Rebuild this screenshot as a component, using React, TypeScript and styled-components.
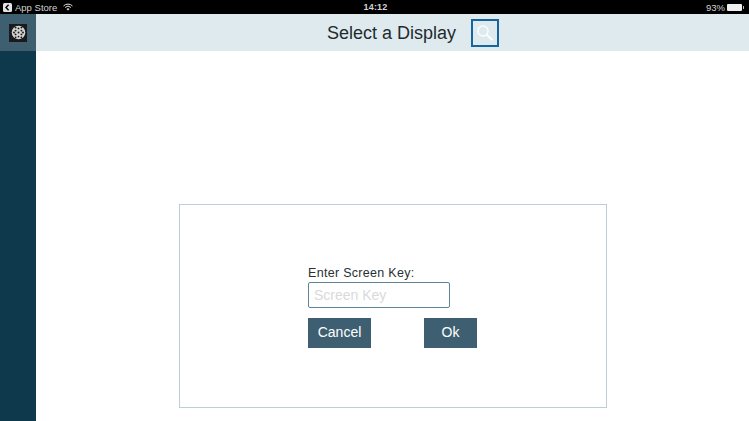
import React from "react";
import styled, { createGlobalStyle } from "styled-components";

const Global = createGlobalStyle`
  html, body { margin: 0; padding: 0; background: #fff; overflow: hidden; }
  * { box-sizing: border-box; }
  body { font-family: "Liberation Sans", Arial, sans-serif; }
`;

const Page = styled.div`
  width: 749px;
  height: 421px;
  display: flex;
  flex-direction: column;
`;

const StatusBar = styled.div`
  height: 14px;
  background: #000;
  color: #d4d4d4;
  font-size: 9.5px;
  display: grid;
  grid-template-columns: 1fr auto 1fr;
  align-items: center;
  padding: 0 4px 0 3px;
`;

const StatusLeft = styled.div`
  display: flex;
  align-items: center;
  gap: 3px;
`;

const StatusRight = styled.div`
  display: flex;
  align-items: center;
  justify-content: flex-end;
  gap: 2px;
`;

const StatusTime = styled.div`
  font-weight: 700;
  font-size: 9px;
  letter-spacing: 0.2px;
  margin-left: 3px;
`;

const StoreLabel = styled.span`
  font-size: 9.5px;
  margin-right: 3px;
`;

const Battery = styled.div`
  width: 15px;
  height: 7px;
  background: #f0f0f0;
  border-radius: 1px;
  margin-right: 3px;
  position: relative;
  &::after {
    content: "";
    position: absolute;
    right: -2px;
    top: 2px;
    width: 1px;
    height: 3px;
    background: #bbb;
  }
`;

const Body = styled.div`
  flex: 1;
  display: flex;
  min-height: 0;
`;

const Sidebar = styled.aside`
  width: 36px;
  background: #0e384c;
  flex: none;
`;

const LogoBlock = styled.div`
  height: 37px;
  background: #3e5f70;
  display: flex;
  align-items: center;
  justify-content: center;
`;

const LogoTile = styled.div`
  width: 18px;
  height: 18px;
  background: #1a1a1c;
  display: flex;
  align-items: center;
  justify-content: center;
`;

const Main = styled.main`
  flex: 1;
  display: flex;
  flex-direction: column;
  min-width: 0;
`;

const Header = styled.header`
  height: 37px;
  background: #deeaee;
  display: flex;
  align-items: center;
  justify-content: center;
  gap: 15px;
  padding-left: 41px;
`;

const Title = styled.h1`
  margin: 0;
  padding-top: 2px;
  font-size: 18px;
  font-weight: 400;
  color: #1f2a30;
`;

const SearchButton = styled.button`
  width: 28px;
  height: 28px;
  padding: 0;
  background: transparent;
  border: 2px solid #1565a0;
  display: flex;
  align-items: center;
  justify-content: center;
`;

const Content = styled.div`
  flex: 1;
  padding: 153px 142px 13px 143px;
`;

const Card = styled.section`
  height: 204px;
  border: 1px solid #bcd0d4;
  background: #fff;
  display: flex;
  flex-direction: column;
  padding: 61px 0 0 128px;
`;

const Label = styled.label`
  font-size: 12.5px;
  color: #2a2f33;
  line-height: 15px;
  letter-spacing: 0.3px;
  margin-bottom: 1px;
`;

const KeyInput = styled.input`
  width: 142px;
  height: 26px;
  border: 1px solid #5f8596;
  border-radius: 2px;
  padding: 0 5px;
  font-size: 14px;
  font-family: inherit;
  outline: none;
  background: #fff;
  &::placeholder { color: #d8dadb; opacity: 1; }
`;

const Actions = styled.div`
  display: flex;
  gap: 53px;
  margin-top: 10px;
`;

const ActionButton = styled.button<{ $w: number }>`
  width: ${(p) => p.$w}px;
  height: 30px;
  border: none;
  background: #3d5f71;
  color: #fff;
  font-size: 14px;
  font-family: inherit;
  padding: 0 0 2px;
`;

const holes: [number, number][] = [
  [7.5, 7.5], [4.6, 5.6], [10.4, 5.6], [4.6, 9.4], [10.4, 9.4], [7.5, 3.4], [7.5, 11.6],
  [3, 7.5], [12, 7.5], [4.6, 2.6], [10.4, 2.6], [4.6, 12.4], [10.4, 12.4],
];

export default function App() {
  return (
    <Page>
      <Global />
      <StatusBar>
        <StatusLeft>
          <svg width="9" height="9" viewBox="0 0 9 9">
            <rect width="9" height="9" rx="1.5" fill="#e4e4e4" />
            <path d="M5.6 1.8 3 4.5l2.6 2.7" fill="none" stroke="#000" strokeWidth="1.4" />
          </svg>
          <StoreLabel>App Store</StoreLabel>
          <svg width="10" height="8" viewBox="0 0 11 8" fill="none" stroke="#e4e4e4">
            <path d="M.6 2.8a7 7 0 0 1 9.8 0" strokeWidth="1.1" />
            <path d="M2.3 4.5a4.6 4.6 0 0 1 6.4 0" strokeWidth="1.1" />
            <path d="M5.5 7.8 3.9 6.1a2.3 2.3 0 0 1 3.2 0z" fill="#e4e4e4" stroke="none" />
          </svg>
        </StatusLeft>
        <StatusTime>14:12</StatusTime>
        <StatusRight>
          <span>93%</span>
          <Battery />
        </StatusRight>
      </StatusBar>
      <Body>
        <Sidebar>
          <LogoBlock>
            <LogoTile>
              <svg width="15" height="15" viewBox="0 0 15 15">
                <circle cx="7.5" cy="7.5" r="6.8" fill="#d4d4d4" />
                {holes.map(([x, y]) => (
                  <circle key={`${x}-${y}`} cx={x} cy={y} r="0.95" fill="#1a1a1c" />
                ))}
              </svg>
            </LogoTile>
          </LogoBlock>
        </Sidebar>
        <Main>
          <Header>
            <Title>Select a Display</Title>
            <SearchButton aria-label="Search">
              <svg width="18" height="18" viewBox="0 0 18 18" fill="none" stroke="#fafdfe">
                <circle cx="7" cy="7" r="5" strokeWidth="1.5" />
                <path d="M10.8 10.8 16.5 16" strokeWidth="2" />
              </svg>
            </SearchButton>
          </Header>
          <Content>
            <Card>
              <Label>Enter Screen Key:</Label>
              <KeyInput placeholder="Screen Key" />
              <Actions>
                <ActionButton $w={63}>Cancel</ActionButton>
                <ActionButton $w={53}>Ok</ActionButton>
              </Actions>
            </Card>
          </Content>
        </Main>
      </Body>
    </Page>
  );
}
